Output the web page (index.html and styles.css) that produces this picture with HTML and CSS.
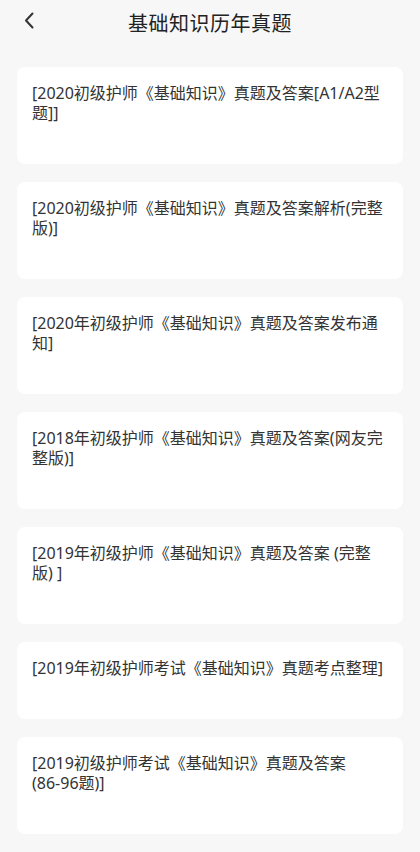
FILE: index.html
```html
<!DOCTYPE html>
<html lang="zh-CN">
<head>
  <meta charset="UTF-8">
  <meta name="viewport" content="width=device-width, initial-scale=1.0">
  <title>基础知识历年真题</title>
  <link rel="stylesheet" href="styles.css">
</head>
<body>
  <div class="header">
    <a class="back" href="#">
      <svg width="10" height="17" viewBox="0 0 10 17"><path d="M8.5 1.5 L2 8.5 L8.5 15.5" fill="none" stroke="#333" stroke-width="2" stroke-linecap="round" stroke-linejoin="round"/></svg>
    </a>
    <h1>基础知识历年真题</h1>
  </div>
  <div class="list">
    <div class="card"><div class="title">[2020初级护师《基础知识》真题及答案[A1/A2型题]]</div></div>
    <div class="card"><div class="title">[2020初级护师《基础知识》真题及答案解析(完整版)]</div></div>
    <div class="card"><div class="title">[2020年初级护师《基础知识》真题及答案发布通知]</div></div>
    <div class="card"><div class="title">[2018年初级护师《基础知识》真题及答案(网友完整版)]</div></div>
    <div class="card"><div class="title">[2019年初级护师《基础知识》真题及答案 (完整版) ]</div></div>
    <div class="card"><div class="title">[2019年初级护师考试《基础知识》真题考点整理]</div></div>
    <div class="card"><div class="title">[2019初级护师考试《基础知识》真题及答案<span class="keep">(86-96题)]</span></div></div>
  </div>
</body>
</html>
```

FILE: styles.css
```css
body {
  margin: 0;
  background: #f7f7f7;
  font-family: "Noto Sans", "Noto Sans CJK SC", sans-serif;
  color: #333;
}
.header {
  height: 44px; display: flex; align-items: center; justify-content: center;
  position: relative;
}
.back { position: absolute; left: 24px; top: 12px; display: block; line-height: 0; }
h1 { margin: 0; font-size: 20px; font-weight: 400; color: #222; letter-spacing: 0.5px; }
.list { padding: 23px 17px 20px; display: flex; flex-direction: column; gap: 18px; }
.card {
  background: #fff; border-radius: 8px;
  padding: 16px 15px 41px;
}
.title { font-size: 16px; line-height: 20px; color: #333; min-height: 20px; }
.keep { white-space: nowrap; }
```
